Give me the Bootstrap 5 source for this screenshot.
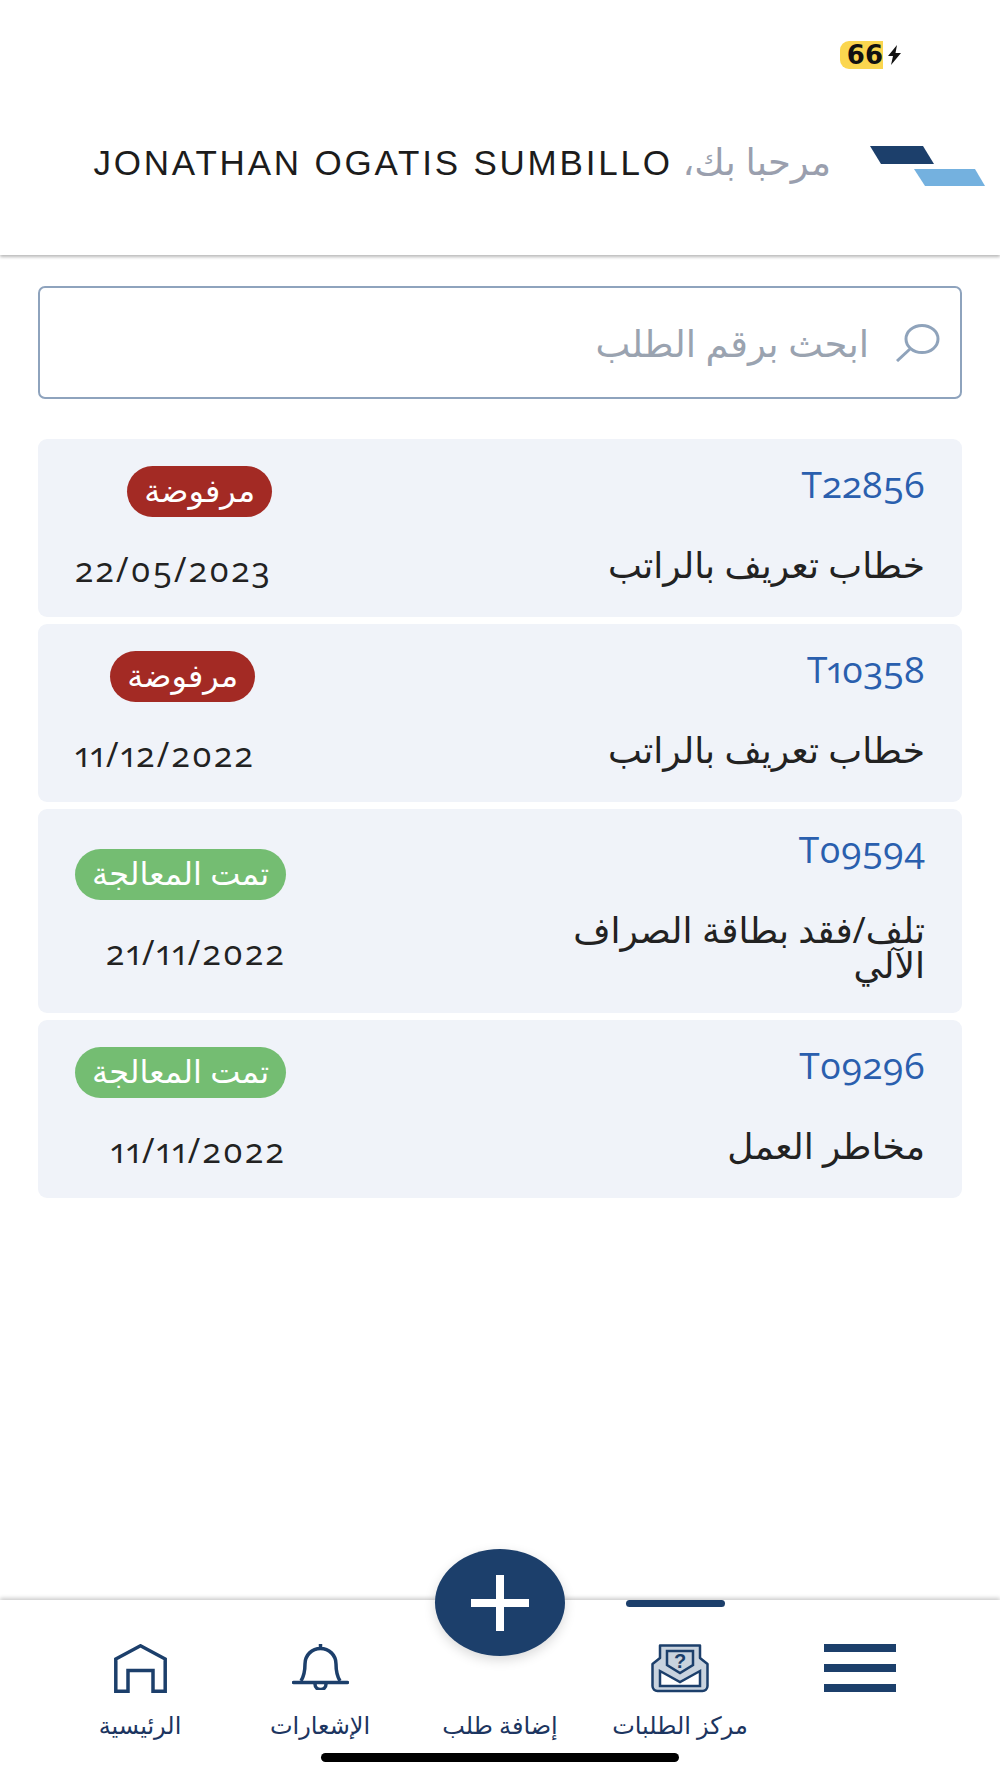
<!DOCTYPE html>
<html lang="ar" dir="rtl">
<head>
    <meta charset="UTF-8">
    <meta name="viewport" content="width=device-width, initial-scale=1.0">
    <title>مركز الطلبات</title>
    <link href="https://cdn.jsdelivr.net/npm/bootstrap@5.3.0/dist/css/bootstrap.min.css" rel="stylesheet">
    <style>
        body {
            background: #fff;
            font-family: "Open Sans", "Noto Sans", "DejaVu Sans", sans-serif;
            color: #222;
        }

        .app-shell { min-height: 1778px; }

        .app-header {
            height: 255px;
            box-shadow: 0 2px 3px rgba(0, 0, 0, .28);
        }

        .batt-row { padding-top: 41px; margin-inline-start: 98px; }
        .batt-level {
            width: 43px;
            height: 28px;
            line-height: 28px;
            background: #fbd64f;
            border-radius: 9px 0 0 9px;
            font-family: "DejaVu Sans", sans-serif;
            font-size: 26px;
            font-weight: 700;
            color: #111;
            text-align: right;
        }
        .greet-row { margin-top: 72px; padding-inline-start: 15px; }
        .greet-text { font-size: 37px; line-height: 40px; margin-inline-start: 39px; padding-bottom: 8px; white-space: nowrap; }
        .greet-hello { color: #9a9fae; }
        .greet-name { font-family: "Liberation Sans", sans-serif; font-size: 35px; color: #1c1c1c; letter-spacing: 2.8px; }

        .search-box {
            margin: 31px 38px 40px;
            height: 113px;
            padding: 0 20px;
            border: 2px solid #8ea3bd;
            border-radius: 7px;
            gap: 24px;
        }
        .search-box input {
            border: 0;
            outline: 0;
            flex: 1;
            min-width: 0;
            font-size: 37px;
            font-family: inherit;
            background: transparent;
        }
        .search-box input::placeholder { color: #9aa3b0; opacity: 1; }

        .req-list { padding: 0 38px; gap: 7px; }
        .req-card {
            min-height: 178px;
            padding: 17px 37px 17px 37px;
            background: #f0f3f9;
            border-radius: 9px;
        }
        .req-main { width: 400px; }
        .req-code {
            line-height: 46px;
            font-size: 37px;
            color: #2a5fae;
            font-variant-numeric: oldstyle-nums proportional-nums;
        }
        .req-title { margin: 40px 0 14px; font-size: 36px; line-height: 35px; color: #222; }
        .req-pill {
            height: 51px;
            line-height: 47px;
            padding: 0 17px;
            font-size: 32px;
            color: #fff;
            white-space: nowrap;
        }
        .pill-rejected { background: #a32a24; }
        .pill-done { background: #74bd72; }
        .req-date {
            margin: 35px 0 5px;
            line-height: 34px;
            font-size: 34px;
            letter-spacing: 2.2px;
            color: #222;
            font-variant-numeric: oldstyle-nums proportional-nums;
        }

        .tab-bar {
            height: 178px;
            padding: 44px 50px 0;
            background: #fff;
            box-shadow: 0 -2px 4px rgba(0, 0, 0, .2);
        }
        .tab-item { width: 180px; color: #1c3560; }
        .tab-icon { height: 49px; }
        .tab-label { margin-top: 19px; font-size: 24px; line-height: 26px; white-space: nowrap; }
        .tab-active-line {
            top: 0;
            right: 275px;
            width: 99px;
            height: 7px;
            background: #1c3f6b;
            border-radius: 4px;
        }
        .add-fab {
            top: -51px;
            left: 435px;
            width: 130px;
            height: 107px;
            background: #1c3f6b;
            border: 0;
            border-radius: 50%;
            box-shadow: 0 4px 12px rgba(0, 0, 0, .15);
        }
        .menu-bars { width: 72px; height: 48px; }
        .menu-bars span { height: 8px; background: #1c3f6b; }
        .home-line {
            width: 358px;
            height: 9px;
            margin-top: 15px;
            background: #000;
            border-radius: 5px;
        }
    </style>
</head>
<body>
<div class="app-shell d-flex flex-column">

    <!-- Header -->
    <header class="app-header">
        <div class="batt-row d-flex align-items-center">
            <svg width="15" height="20" viewBox="0 0 15 20" class="ms-1"><path d="M10 0 1 11h5l-2 9 10-12H8.500z" fill="#111"/></svg>
            <div class="batt-level" dir="ltr">66</div>
        </div>
        <div class="greet-row d-flex align-items-center">
            <svg width="115" height="40" viewBox="0 0 115 40">
                <polygon points="0,0 53,0 64,18 11,18" fill="#1c3f6b"/>
                <polygon points="44,23 105,23 115,40 55,40" fill="#74b1df"/>
            </svg>
            <div class="greet-text"><span class="greet-hello">مرحبا بك،</span> <span class="greet-name">JONATHAN OGATIS SUMBILLO</span></div>
        </div>
    </header>

    <!-- Search -->
    <div class="search-box d-flex align-items-center">
        <svg width="45" height="38" viewBox="0 0 45 38" fill="none" stroke="#8fa3bb" stroke-width="3">
            <ellipse cx="27" cy="15" rx="16" ry="13.500"/>
            <path d="M15 25 2 37"/>
        </svg>
        <input type="text" placeholder="ابحث برقم الطلب">
    </div>

    <!-- Requests -->
    <main class="req-list d-flex flex-column flex-grow-1">
        <div class="req-card d-flex align-items-center justify-content-between">
            <div class="req-main">
                <div class="req-code">T22856</div>
                <div class="req-title">خطاب تعريف بالراتب</div>
            </div>
            <div class="d-flex flex-column align-items-start">
                <span class="req-pill pill-rejected rounded-pill">مرفوضة</span>
                <div class="req-date">22/05/2023</div>
            </div>
        </div>
        <div class="req-card d-flex align-items-center justify-content-between">
            <div class="req-main">
                <div class="req-code">T10358</div>
                <div class="req-title">خطاب تعريف بالراتب</div>
            </div>
            <div class="d-flex flex-column align-items-start">
                <span class="req-pill pill-rejected rounded-pill">مرفوضة</span>
                <div class="req-date">11/12/2022</div>
            </div>
        </div>
        <div class="req-card d-flex align-items-center justify-content-between">
            <div class="req-main">
                <div class="req-code">T09594</div>
                <div class="req-title">تلف/فقد بطاقة الصراف الآلي</div>
            </div>
            <div class="d-flex flex-column align-items-start">
                <span class="req-pill pill-done rounded-pill">تمت المعالجة</span>
                <div class="req-date">21/11/2022</div>
            </div>
        </div>
        <div class="req-card d-flex align-items-center justify-content-between">
            <div class="req-main">
                <div class="req-code">T09296</div>
                <div class="req-title">مخاطر العمل</div>
            </div>
            <div class="d-flex flex-column align-items-start">
                <span class="req-pill pill-done rounded-pill">تمت المعالجة</span>
                <div class="req-date">11/11/2022</div>
            </div>
        </div>
    </main>

    <!-- Bottom tabs -->
    <nav class="tab-bar position-relative">
        <div class="tab-active-line position-absolute"></div>
        <button class="add-fab position-absolute d-flex align-items-center justify-content-center" type="button" aria-label="إضافة طلب">
            <svg width="58" height="56" viewBox="0 0 58 56"><path d="M29 0v56M0 28h58" stroke="#fff" stroke-width="8"/></svg>
        </button>
        <div class="d-flex">
            <div class="tab-item d-flex flex-column align-items-center">
                <div class="tab-icon menu-bars d-flex flex-column justify-content-between"><span></span><span></span><span></span></div>
            </div>
            <div class="tab-item d-flex flex-column align-items-center">
                <div class="tab-icon">
                    <svg width="58" height="49" viewBox="0 0 58 49">
                        <path d="M9 1.500H49V14L56.500 20V42a5 5 0 0 1-5 5H6.500a5 5 0 0 1-5-5V20L9 14Z" fill="#c9d3de" stroke="#1c3f6b" stroke-width="2.500" stroke-linejoin="round"/>
                        <path d="M16 7H42V21L29 29 16 21Z" fill="#c9d3de" stroke="#1c3f6b" stroke-width="2.500"/>
                        <path d="M9 27 29 38 49 27V42H9Z" fill="#fff" stroke="#1c3f6b" stroke-width="2.500"/>
                        <text x="29" y="24" text-anchor="middle" font-family="Liberation Sans, sans-serif" font-weight="700" font-size="20" fill="#1c3f6b">?</text>
                    </svg>
                </div>
                <div class="tab-label">مركز الطلبات</div>
            </div>
            <div class="tab-item d-flex flex-column align-items-center">
                <div class="tab-icon"></div>
                <div class="tab-label">إضافة طلب</div>
            </div>
            <div class="tab-item d-flex flex-column align-items-center">
                <div class="tab-icon">
                    <svg width="57" height="46" viewBox="0 0 57 46" fill="none" stroke="#1c3f6b" stroke-width="3.500">
                        <path d="M28.500 0v4M9 37c3-5 4-10 4-17C13 11 20 4.500 28.500 4.500S44 11 44 20c0 7 1 12 4 17"/>
                        <path d="M1.500 38.500H55.500" stroke-linecap="round"/>
                        <path d="M23 40a5.500 5.500 0 0 0 11 0"/>
                    </svg>
                </div>
                <div class="tab-label">الإشعارات</div>
            </div>
            <div class="tab-item d-flex flex-column align-items-center">
                <div class="tab-icon">
                    <svg width="53" height="49" viewBox="0 0 53 49" fill="none" stroke="#1c3f6b" stroke-width="3.500">
                        <path d="M1.800 47.300V15L26.500 1.800 51.200 15V47.300H39V26.500H14V47.300Z"/>
                    </svg>
                </div>
                <div class="tab-label">الرئيسية</div>
            </div>
        </div>
        <div class="home-line mx-auto"></div>
    </nav>
</div>
<script src="https://cdn.jsdelivr.net/npm/bootstrap@5.3.0/dist/js/bootstrap.bundle.min.js"></script>
</body>
</html>
